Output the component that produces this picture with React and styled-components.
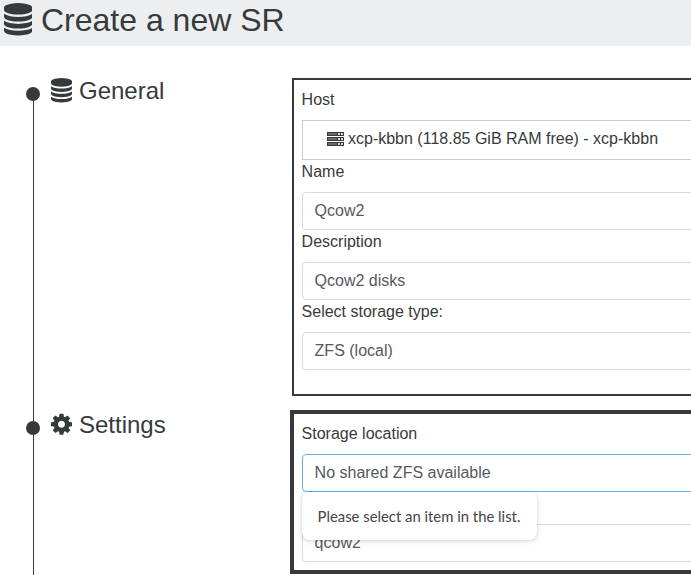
import React from "react";
import styled, { createGlobalStyle } from "styled-components";

const Global = createGlobalStyle`
  html, body { margin: 0; padding: 0; background: #fff; overflow: hidden; }
  body { width: 691px; height: 575px; font-family: "Liberation Sans", Arial, sans-serif; font-size: 16px; line-height: 24px; color: #373a3c; }
`;

const DB_PATH =
  "M896 768q237 0 443-43t325-127v170q0 69-103 128t-280 93.5-385 34.5-385-34.5-280-93.5-103-128v-170q119 84 325 127t443 43zm0 768q237 0 443-43t325-127v170q0 69-103 128t-280 93.5-385 34.5-385-34.5-280-93.5-103-128v-170q119 84 325 127t443 43zm0-384q237 0 443-43t325-127v170q0 69-103 128t-280 93.5-385 34.5-385-34.5-280-93.5-103-128v-170q119 84 325 127t443 43zm0-1152q208 0 385 34.5t280 93.5 103 128v128q0 69-103 128t-280 93.5-385 34.5-385-34.5-280-93.5-103-128v-128q0-69 103-128t280-93.5 385-34.5z";
const COG_PATH =
  "M1152 896q0-106-75-181t-181-75-181 75-75 181 75 181 181 75 181-75 75-181zm512-109v222q0 12-8 23t-20 13l-185 28q-19 54-39 91 35 50 107 138 10 12 10 25t-9 23q-27 37-99 108t-94 71q-12 0-26-9l-138-108q-44 23-91 38-16 136-29 186-7 28-36 28h-222q-14 0-24.5-8.5t-11.5-21.5l-28-184q-49-16-90-37l-141 107q-10 9-25 9-14 0-25-11-126-114-165-168-7-10-7-23 0-12 8-23 15-21 51-66.5t54-70.5q-27-50-41-99l-183-27q-13-2-21-12.5t-8-23.5v-222q0-12 8-23t19-13l186-28q14-46 39-92-40-57-107-138-10-12-10-24 0-10 9-23 26-36 98.5-107.5t94.5-71.5q13 0 26 10l138 107q44-23 91-38 16-136 29-186 7-28 36-28h222q14 0 24.5 8.5t11.5 21.5l28 184q49 16 90 37l142-107q9-9 24-9 13 0 25 10 129 119 165 170 7 8 7 22 0 12-8 23-15 21-51 66.5t-54 70.5q26 50 41 98l183 28q13 2 21 12.5t8 23.5z";

const GlyphSvg = styled.svg`
  flex: none;
  display: block;
  fill: currentColor;
`;

const Glyph = ({ d, width, height }) => (
  <GlyphSvg viewBox="128 0 1536 1792" width={width} height={height} preserveAspectRatio="none">
    <path d={d} />
  </GlyphSvg>
);

const ServerSvg = styled.svg`
  flex: none;
  display: block;
  margin-top: 5px;
`;

const ServerIcon = () => (
  <ServerSvg width="17" height="14" viewBox="0 0 17 14">
    {[0, 5, 10].map((y) => (
      <g key={y}>
        <rect x="0" y={y} width="17" height="4" fill="#373a3c" />
        <rect x="1" y={y + 1.5} width="9" height="1" fill="#9a9c9d" />
        <rect x="11" y={y + 1} width="2" height="2" fill="#d8d8d8" />
        <rect x="14" y={y + 1} width="2" height="2" fill="#d8d8d8" />
      </g>
    ))}
  </ServerSvg>
);

const Page = styled.div`
  width: 691px;
  height: 575px;
  overflow: hidden;
`;

const Header = styled.header`
  height: 46px;
  box-sizing: border-box;
  padding: 3px 0 0 4px;
  display: flex;
  align-items: flex-start;
  gap: 8.7px;
  background: #eceeef;
`;

const Title = styled.h1`
  margin: -1px 0 0;
  font-size: 32px;
  font-weight: 400;
  line-height: 36px;
`;

const Steps = styled.div`
  padding-top: 32px;
  display: flex;
  flex-direction: column;
`;

const Step = styled.section`
  display: flex;
  padding-bottom: 16px;
`;

const Aside = styled.div`
  flex: 0 0 291.6px;
  display: flex;
  padding-left: 26px;
  box-sizing: border-box;
`;

const Rail = styled.div`
  flex: 0 0 14px;
  display: flex;
  flex-direction: column;
  align-items: flex-start;
  margin-bottom: -16px;
`;

const Stem = styled.div`
  width: 1px;
  margin-left: 7px;
  background: ${(p) => (p.$hidden ? "transparent" : "#373a3c")};
  ${(p) => (p.$height ? `height: ${p.$height}px;` : "flex: 1;")}
`;

const Dot = styled.div`
  width: 14px;
  height: 14px;
  border-radius: 50%;
  background: #373a3c;
`;

const StepTitle = styled.h2`
  margin: 0 0 0 11px;
  font-size: 24px;
  font-weight: 400;
  line-height: 26px;
  display: flex;
  align-items: flex-start;
  gap: 7px;
  height: 26px;
`;

const Panel = styled.div`
  flex: 0 0 440px;
  box-sizing: border-box;
  border: ${(p) => (p.$active ? 4 : 2)}px solid #373a3c;
  padding: 8px;
  margin: ${(p) => (p.$active ? "-2px 0 -2px -2px" : "0")};
  position: relative;
`;

const Label = styled.label`
  display: block;
  margin-bottom: 8px;
  height: 24px;
`;

const Input = styled.div`
  box-sizing: border-box;
  height: 38px;
  padding: 6px 12px;
  border: 1px solid ${(p) => (p.$focus ? "#66afe9" : "#d9d9d9")};
  border-radius: 4px;
  color: #55595c;
`;

const HostSelect = styled.div`
  box-sizing: border-box;
  height: 40px;
  padding: 6px 0 0 24.4px;
  border: 1px solid #ccc;
  display: flex;
  align-items: flex-start;
  gap: 4px;
  color: #373a3c;
  white-space: nowrap;
`;

const Spacer = styled.div`
  height: 16px;
`;

const Tooltip = styled.div`
  position: absolute;
  left: 8px;
  top: 78px;
  width: 235px;
  height: 48px;
  box-sizing: border-box;
  padding: 0 0 0 16px;
  display: flex;
  align-items: center;
  background: #fff;
  border-radius: 8px;
  box-shadow: 0 1px 5px rgba(0, 0, 0, 0.2);
  font-family: Lato, sans-serif;
  font-size: 14.85px;
  color: #444;
  white-space: nowrap;
`;

export default function App() {
  return (
    <Page>
      <Global />
      <Header>
        <Glyph d={DB_PATH} width={28.3} height={32.5} />
        <Title>Create a new SR</Title>
      </Header>
      <Steps>
        <Step>
          <Aside>
            <Rail>
              <Stem $hidden $height={9} />
              <Dot />
              <Stem />
            </Rail>
            <StepTitle>
              <Glyph d={DB_PATH} width={21} height={24.5} />
              General
            </StepTitle>
          </Aside>
          <Panel>
            <Label>Host</Label>
            <HostSelect>
              <ServerIcon />
              xcp-kbbn (118.85 GiB RAM free) - xcp-kbbn
            </HostSelect>
            <Label>Name</Label>
            <Input>Qcow2</Input>
            <Label>Description</Label>
            <Input>Qcow2 disks</Input>
            <Label>Select storage type:</Label>
            <Input>ZFS (local)</Input>
            <Spacer />
          </Panel>
        </Step>
        <Step>
          <Aside>
            <Rail>
              <Stem $height={9} />
              <Dot />
              <Stem />
            </Rail>
            <StepTitle>
              <Glyph d={COG_PATH} width={21} height={24.5} />
              Settings
            </StepTitle>
          </Aside>
          <Panel $active>
            <Label>Storage location</Label>
            <Input $focus>No shared ZFS available</Input>
            <Label>Name</Label>
            <Input>qcow2</Input>
            <Tooltip>Please select an item in the list.</Tooltip>
          </Panel>
        </Step>
      </Steps>
    </Page>
  );
}
